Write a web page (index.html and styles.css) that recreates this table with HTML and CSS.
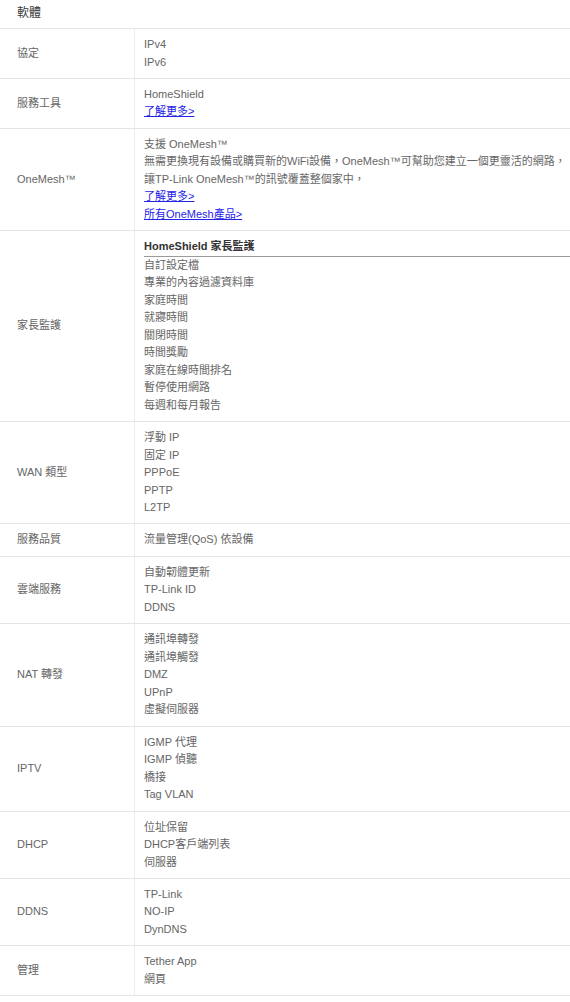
FILE: index.html
```html
<!DOCTYPE html>
<html lang="zh-Hant">
<head>
<meta charset="utf-8">
<title>軟體</title>
<link rel="stylesheet" href="styles.css">
</head>
<body>
<section class="spec">
  <h2 class="spec-title">軟體</h2>
  <div class="spec-row">
    <div class="spec-key">協定</div>
    <div class="spec-val"><div>IPv4</div><div>IPv6</div></div>
  </div>
  <div class="spec-row">
    <div class="spec-key">服務工具</div>
    <div class="spec-val"><div>HomeShield</div><div><a href="#">了解更多&gt;</a></div></div>
  </div>
  <div class="spec-row">
    <div class="spec-key">OneMesh™</div>
    <div class="spec-val">
      <div>支援 OneMesh™</div>
      <div class="nowrap">無需更換現有設備或購買新的WiFi設備，OneMesh™可幫助您建立一個更靈活的網路，</div>
      <div>讓TP-Link OneMesh™的訊號覆蓋整個家中，</div>
      <div><a href="#">了解更多&gt;</a></div>
      <div><a href="#">所有OneMesh產品&gt;</a></div>
    </div>
  </div>
  <div class="spec-row">
    <div class="spec-key">家長監護</div>
    <div class="spec-val">
      <div class="sub-head">HomeShield 家長監護</div>
      <div>自訂設定檔</div>
      <div>專業的內容過濾資料庫</div>
      <div>家庭時間</div>
      <div>就寢時間</div>
      <div>關閉時間</div>
      <div>時間獎勵</div>
      <div>家庭在線時間排名</div>
      <div>暫停使用網路</div>
      <div>每週和每月報告</div>
    </div>
  </div>
  <div class="spec-row">
    <div class="spec-key">WAN 類型</div>
    <div class="spec-val"><div>浮動 IP</div><div>固定 IP</div><div>PPPoE</div><div>PPTP</div><div>L2TP</div></div>
  </div>
  <div class="spec-row">
    <div class="spec-key">服務品質</div>
    <div class="spec-val"><div>流量管理(QoS) 依設備</div></div>
  </div>
  <div class="spec-row">
    <div class="spec-key">雲端服務</div>
    <div class="spec-val"><div>自動韌體更新</div><div>TP-Link ID</div><div>DDNS</div></div>
  </div>
  <div class="spec-row">
    <div class="spec-key">NAT 轉發</div>
    <div class="spec-val"><div>通訊埠轉發</div><div>通訊埠觸發</div><div>DMZ</div><div>UPnP</div><div>虛擬伺服器</div></div>
  </div>
  <div class="spec-row">
    <div class="spec-key">IPTV</div>
    <div class="spec-val"><div>IGMP 代理</div><div>IGMP 偵聽</div><div>橋接</div><div>Tag VLAN</div></div>
  </div>
  <div class="spec-row">
    <div class="spec-key">DHCP</div>
    <div class="spec-val"><div>位址保留</div><div>DHCP客戶端列表</div><div>伺服器</div></div>
  </div>
  <div class="spec-row">
    <div class="spec-key">DDNS</div>
    <div class="spec-val"><div>TP-Link</div><div>NO-IP</div><div>DynDNS</div></div>
  </div>
  <div class="spec-row">
    <div class="spec-key">管理</div>
    <div class="spec-val"><div>Tether App</div><div>網頁</div></div>
  </div>
</section>
</body>
</html>
```

FILE: styles.css
```css
html, body {
  margin: 0;
  padding: 0;
  background: #ffffff;
}

body {
  font-family: "Liberation Sans", Arial, "Noto Sans CJK TC", sans-serif;
  font-size: 11px;
  color: #666666;
}

.spec {
  width: 570px;
}

.spec-title {
  margin: 0;
  height: 29px;
  box-sizing: border-box;
  padding: 6px 0 0 17px;
  font-size: 12px;
  font-weight: normal;
  line-height: 14px;
  color: #3a3a3a;
  border-bottom: 1px solid #e4e4e4;
}

.spec-row {
  display: grid;
  grid-template-columns: 135px 1fr;
  border-bottom: 1px solid #e4e4e4;
}

.spec-key {
  display: flex;
  align-items: center;
  padding: 0 0 0 17px;
  border-right: 1px solid #e9ecf3;
  line-height: 17.5px;
}

.spec-val {
  padding: 7px 4px 6.9px 9px;
  line-height: 17.5px;
}

.nowrap {
  white-space: nowrap;
}

.spec-val a {
  color: #2424e8;
  text-decoration: underline;
}

.sub-head {
  font-weight: bold;
  color: #333333;
  border-bottom: 1px solid #9a9a9a;
  margin-right: -4px;
}
```
